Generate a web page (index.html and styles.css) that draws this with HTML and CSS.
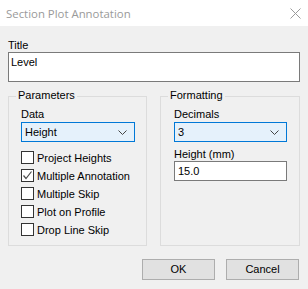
FILE: index.html
```html
<!DOCTYPE html>
<html>
<head>
    <title>Section Plot Annotation</title>
    <link rel="stylesheet" href="styles.css">
</head>
<body>
    <div class="window">
        <div class="titleBar">
            <span class="titleText">Section Plot Annotation</span>
            <svg class="closeIcon" width="11" height="11" viewBox="0 0 11 11">
                <path d="M0.5 0.5 L10.5 10.5 M10.5 0.5 L0.5 10.5" stroke="#9a9a9a" stroke-width="1" fill="none"/>
            </svg>
        </div>
        <div class="dialogBody">
            <div class="label">Title</div>
            <div class="textArea">Level</div>

            <div class="groupRow">
                <div class="group groupParams">
                    <span class="legend">Parameters</span>
                    <div class="label">Data</div>
                    <div class="combo">
                        <span>Height</span>
                        <svg class="chevron" width="9" height="5" viewBox="0 0 9 5">
                            <path d="M0.5 0.5 L4.5 4.5 L8.5 0.5" stroke="#444" stroke-width="1" fill="none"/>
                        </svg>
                    </div>
                    <div class="checkList">
                        <div class="checkRow"><span class="checkBox"></span>Project Heights</div>
                        <div class="checkRow">
                            <span class="checkBox">
                                <svg width="11" height="11" viewBox="0 0 11 11">
                                    <path d="M1.5 5.5 L4 8.5 L9.5 1.5" stroke="#4d4d4d" stroke-width="1.2" fill="none"/>
                                </svg>
                            </span>Multiple Annotation
                        </div>
                        <div class="checkRow"><span class="checkBox"></span>Multiple Skip</div>
                        <div class="checkRow"><span class="checkBox"></span>Plot on Profile</div>
                        <div class="checkRow"><span class="checkBox"></span>Drop Line Skip</div>
                    </div>
                </div>

                <div class="group groupFormat">
                    <span class="legend">Formatting</span>
                    <div class="label">Decimals</div>
                    <div class="combo">
                        <span>3</span>
                        <svg class="chevron" width="9" height="5" viewBox="0 0 9 5">
                            <path d="M0.5 0.5 L4.5 4.5 L8.5 0.5" stroke="#444" stroke-width="1" fill="none"/>
                        </svg>
                    </div>
                    <div class="label labelGap">Height (mm)</div>
                    <div class="textBox">15.0</div>
                </div>
            </div>

            <div class="buttonRow">
                <div class="button">OK</div>
                <div class="button">Cancel</div>
            </div>
        </div>
    </div>
</body>
</html>
```

FILE: styles.css
```css
body
{
    margin: 0;
    background: #f0f0f0;
    font-family: "Liberation Sans", Arial, sans-serif;
    font-size: 11px;
    color: #000;
}
.window
{
    width: 308px;
    height: 289px;
    overflow: hidden;
}
.titleBar
{
    height: 26px;
    background: #fff;
    display: flex;
    align-items: center;
    justify-content: space-between;
    padding: 0 7px 0 6px;
}
.titleText
{
    font-family: "Open Sans", "Noto Sans", sans-serif;
    font-size: 11.4px;
    color: #9a9a9a;
}
.closeIcon
{
    display: block;
}
.dialogBody
{
    padding: 13px 8px 0 8px;
}
.label
{
    height: 13px;
    line-height: 13px;
}
.textArea
{
    background: #fff;
    border: 1px solid #7a7a7a;
    padding: 3px 2px 0 2px;
    box-sizing: content-box;
    height: 25px;
}
.groupRow
{
    display: flex;
    gap: 13px;
    margin-top: 14px;
}
.group
{
    position: relative;
    border: 1px solid #dcdcdc;
    height: 150px;
    box-sizing: border-box;
    padding-top: 11px;
}
.groupParams
{
    width: 140px;
    padding-left: 12px;
}
.groupFormat
{
    width: 141px;
    padding-left: 13px;
}
.legend
{
    position: absolute;
    top: -8px;
    left: 7px;
    background: #f0f0f0;
    padding: 0 2px;
    line-height: 13px;
}
.combo
{
    margin-top: 1px;
    height: 20px;
    width: 114px;
    box-sizing: border-box;
    background: #e5f1fb;
    border: 1px solid #0078d7;
    display: flex;
    align-items: center;
    justify-content: space-between;
    padding: 0 7px 0 3px;
}
.groupFormat .combo
{
    width: 113px;
}
.chevron
{
    display: block;
}
.checkList
{
    margin-top: 9px;
}
.checkRow
{
    display: flex;
    align-items: center;
    height: 13px;
    margin-bottom: 5px;
}
.checkBox
{
    width: 13px;
    height: 13px;
    box-sizing: border-box;
    border: 1px solid #333;
    background: #fff;
    margin-right: 3px;
    display: flex;
    align-items: center;
    justify-content: center;
}
.checkBox svg
{
    display: block;
}
.labelGap
{
    margin-top: 6px;
}
.textBox
{
    height: 20px;
    width: 113px;
    box-sizing: border-box;
    background: #fff;
    border: 1px solid #7a7a7a;
    padding: 2px 3px 0 3px;
    line-height: 15px;
}
.buttonRow
{
    display: flex;
    justify-content: flex-end;
    gap: 11px;
    margin-top: 13px;
    padding-right: 1px;
}
.button
{
    width: 73px;
    height: 21px;
    box-sizing: border-box;
    background: #e1e1e1;
    border: 1px solid #adadad;
    text-align: center;
    line-height: 19px;
}
```
